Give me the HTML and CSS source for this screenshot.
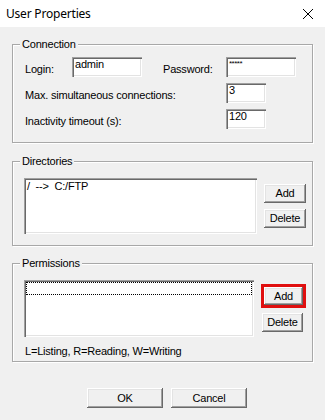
FILE: index.html
```
<!DOCTYPE html>
<html>
<head>
<meta charset="utf-8">
<link rel="stylesheet" href="styles.css">
</head>
<body>
<div class="window">
  <div class="titlebar">
    <span class="title">User Properties</span>
    <svg class="close" width="12" height="12" viewBox="0 0 12 12"><path d="M1 1 L11 11 M11 1 L1 11" stroke="#000" stroke-width="1" fill="none"/></svg>
  </div>
  <div class="client">
    <fieldset class="group conn">
      <legend>Connection</legend>
      <div class="row">
        <span class="lbl login-lbl">Login:</span>
        <div class="edit w70">admin</div>
        <span class="lbl pass-lbl">Password:</span>
        <div class="edit w70 pw">*****</div>
      </div>
      <div class="row">
        <span class="lbl long-lbl">Max. simultaneous connections:</span>
        <div class="edit w40">3</div>
      </div>
      <div class="row">
        <span class="lbl long-lbl">Inactivity timeout (s):</span>
        <div class="edit w40">120</div>
      </div>
    </fieldset>

    <fieldset class="group dirs">
      <legend>Directories</legend>
      <div class="listrow">
        <div class="list dirlist"><div class="item">/&nbsp;&nbsp;--&gt;&nbsp;&nbsp;C:/FTP</div></div>
        <div class="btncol">
          <div class="btn small">Add</div>
          <div class="btn small">Delete</div>
        </div>
      </div>
    </fieldset>

    <fieldset class="group perms">
      <legend>Permissions</legend>
      <div class="listrow">
        <div class="list permlist"><div class="focus"></div></div>
        <div class="btncol perm-btns">
          <div class="hilite"><div class="btn inner">Add</div></div>
          <div class="btn small">Delete</div>
        </div>
      </div>
      <div class="note">L=Listing, R=Reading, W=Writing</div>
    </fieldset>

    <div class="footer">
      <div class="btn big">OK</div>
      <div class="btn big">Cancel</div>
    </div>
  </div>
</div>
</body>
</html>
```
FILE: styles.css
```
html, body {
  margin: 0;
  padding: 0;
  background: #f0f0f0;
}
.window {
  width: 325px;
  height: 420px;
  display: flex;
  flex-direction: column;
  font-family: "Liberation Sans", Arial, sans-serif;
  font-size: 11px;
  letter-spacing: -0.2px;
  color: #000;
  overflow: hidden;
}
.titlebar {
  height: 27px;
  background: #fff;
  display: flex;
  align-items: center;
  justify-content: space-between;
  padding: 0 11px 0 6px;
}
.title {
  font-family: "Noto Sans", "Open Sans", sans-serif;
  font-size: 12px;
  letter-spacing: -0.2px;
  color: #000;
}
.close {
  display: block;
}
.client {
  flex: 1;
  background: #f0f0f0;
  padding: 11px 12px 0 12px;
  display: flex;
  flex-direction: column;
}
.group {
  margin: 0;
  border: 1px solid #a8a8a8;
  box-shadow: 1px 1px 0 #fff, inset 1px 1px 0 #fff;
  padding: 6px 11px 13px 12px;
  min-width: 0;
}
.group legend {
  padding: 0 2px;
  margin-left: -5px;
  line-height: 13px;
  background: #f0f0f0;
}
.row {
  display: flex;
  align-items: flex-start;
  height: 20px;
  margin-bottom: 6px;
}
.row:last-child {
  margin-bottom: 0;
}
.lbl {
  line-height: 13px;
  padding-top: 6px;
  white-space: nowrap;
}
.login-lbl { width: 47px; }
.pass-lbl { width: 63px; margin-left: 21px; }
.long-lbl { width: 201px; }
.edit {
  height: 20px;
  box-sizing: border-box;
  background: #fff;
  box-shadow: inset 1px 1px 0 #a0a0a0, inset 2px 2px 0 #696969, inset -1px -1px 0 #fff, inset -2px -2px 0 #e3e3e3;
  padding: 1px 0 0 3px;
  line-height: 13px;
}
.w70 { width: 70px; }
.w40 { width: 40px; }
.pw {
  font-size: 8px;
  line-height: 10px;
  padding-top: 2px;
  letter-spacing: -0.5px;
}
.dirs { margin-top: 12px; padding: 10px 6px 11px 11px; }
.perms { margin-top: 11px; padding: 10px 6px 3px 11px; }
.dirs legend, .perms legend { margin-left: -4px; }
.listrow {
  display: flex;
  gap: 7px;
}
.list {
  width: 233px;
  background: #fff;
  box-shadow: inset 1px 1px 0 #a0a0a0, inset 2px 2px 0 #696969, inset -1px -1px 0 #fff, inset -2px -2px 0 #e3e3e3;
  box-sizing: border-box;
  padding: 2px;
}
.dirlist { height: 56px; }
.permlist { height: 57px; }
.item {
  line-height: 13px;
  padding-left: 1px;
}
.focus {
  height: 13px;
  border: 1px dotted #000;
  box-sizing: border-box;
}
.btncol {
  display: flex;
  flex-direction: column;
  gap: 6px;
  padding-top: 6px;
}
.btn {
  box-sizing: border-box;
  background: #f0f0f0;
  box-shadow: inset -1px -1px 0 #696969, inset 1px 1px 0 #fff, inset -2px -2px 0 #a0a0a0, inset 2px 2px 0 #e3e3e3;
  display: flex;
  align-items: center;
  justify-content: center;
  line-height: 13px;
}
.small { width: 42px; height: 19px; }
.perm-btns { padding-top: 4px; gap: 5px; }
.perm-btns .small { margin-left: 1px; width: 41px; }
.hilite {
  width: 45px;
  height: 24px;
  box-sizing: border-box;
  border: 3px solid #e00f0f;
}
.inner { width: 39px; height: 18px; }
.note {
  margin-top: 8px;
  line-height: 13px;
  padding-left: 1px;
}
.footer {
  display: flex;
  justify-content: center;
  gap: 8px;
  margin-top: 26px;
  padding-left: 9px;
}
.big { width: 76px; height: 20px; }
```
